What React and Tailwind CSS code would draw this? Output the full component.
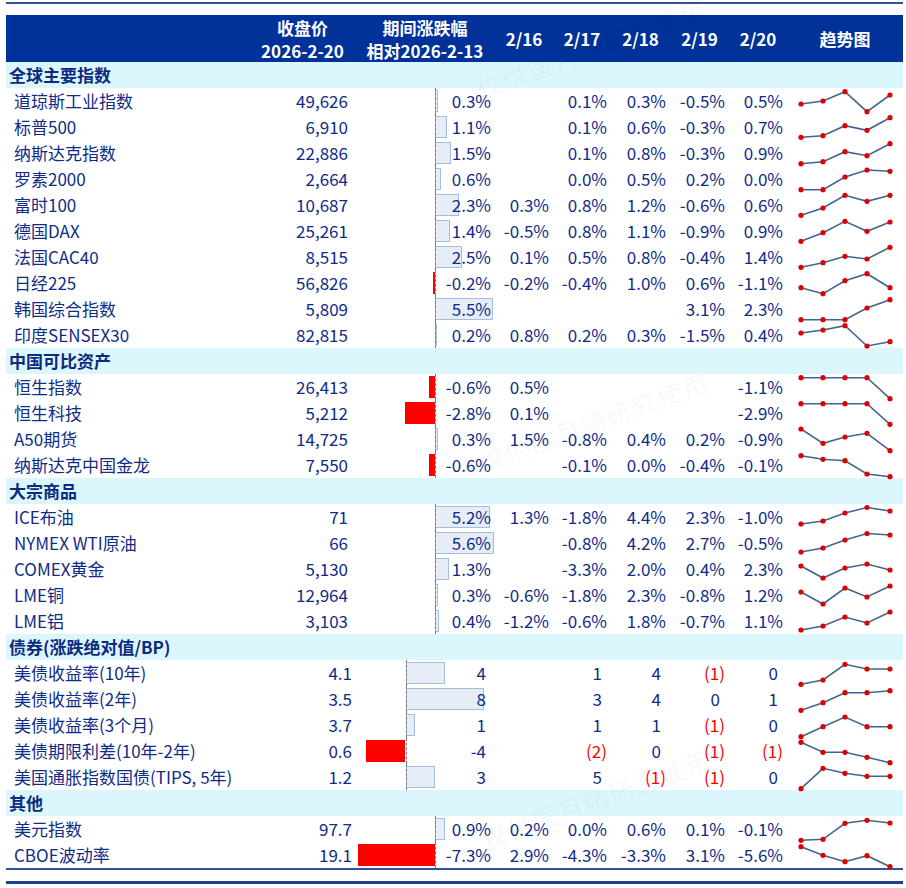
import React from "react";

const PCT = 10.6;
const BP = 9.8;

const sections = [
  {
    title: "全球主要指数",
    unit: "pct",
    rows: [
      { name: "道琼斯工业指数", price: "49,626", chg: 0.3, days: ["", "0.1%", "0.3%", "-0.5%", "0.5%"], spark: [16, 13, 3.7, 23.7, 7] },
      { name: "标普500", price: "6,910", chg: 1.1, days: ["", "0.1%", "0.6%", "-0.3%", "0.7%"], spark: [23.3, 21.7, 11.7, 16.3, 3.7] },
      { name: "纳斯达克指数", price: "22,886", chg: 1.5, days: ["", "0.1%", "0.8%", "-0.3%", "0.9%"], spark: [23.7, 21.7, 11.7, 15.7, 3.7] },
      { name: "罗素2000", price: "2,664", chg: 0.6, days: ["", "0.0%", "0.5%", "0.2%", "0.0%"], spark: [23.7, 23.7, 11, 4, 5.3] },
      { name: "富时100", price: "10,687", chg: 2.3, days: ["0.3%", "0.8%", "1.2%", "-0.6%", "0.6%"], spark: [23.3, 16, 3.3, 9.3, 3.3] },
      { name: "德国DAX", price: "25,261", chg: 1.4, days: ["-0.5%", "0.8%", "1.1%", "-0.9%", "0.9%"], spark: [23.3, 14.7, 3.3, 13.3, 4] },
      { name: "法国CAC40", price: "8,515", chg: 2.5, days: ["0.1%", "0.5%", "0.8%", "-0.4%", "1.4%"], spark: [23.3, 18.7, 12.3, 15, 3.3] },
      { name: "日经225", price: "56,826", chg: -0.2, days: ["-0.2%", "-0.4%", "1.0%", "0.6%", "-1.1%"], spark: [17.7, 23.7, 10.7, 3.7, 17.7] },
      { name: "韩国综合指数", price: "5,809", chg: 5.5, days: ["", "", "", "3.1%", "2.3%"], spark: [23.7, 23.7, 23.7, 12, 3.7] },
      { name: "印度SENSEX30", price: "82,815", chg: 0.2, days: ["0.8%", "0.2%", "0.3%", "-1.5%", "0.4%"], spark: [11, 8, 3.7, 24, 19.7] },
    ],
  },
  {
    title: "中国可比资产",
    unit: "pct",
    rows: [
      { name: "恒生指数", price: "26,413", chg: -0.6, days: ["0.5%", "", "", "", "-1.1%"], spark: [3.7, 3.7, 3.7, 3.7, 24.7] },
      { name: "恒生科技", price: "5,212", chg: -2.8, days: ["0.1%", "", "", "", "-2.9%"], spark: [3.7, 3.7, 3.7, 3.7, 24.3] },
      { name: "A50期货", price: "14,725", chg: 0.3, days: ["1.5%", "-0.8%", "0.4%", "0.2%", "-0.9%"], spark: [3, 17.3, 11, 7.3, 24.7] },
      { name: "纳斯达克中国金龙", price: "7,550", chg: -0.6, days: ["", "-0.1%", "0.0%", "-0.4%", "-0.1%"], spark: [3.7, 7.3, 8.7, 22, 24.7] },
    ],
  },
  {
    title: "大宗商品",
    unit: "pct",
    rows: [
      { name: "ICE布油", price: "71", chg: 5.2, days: ["1.3%", "-1.8%", "4.4%", "2.3%", "-1.0%"], spark: [20, 17, 9, 3.5, 7] },
      { name: "NYMEX WTI原油", price: "66", chg: 5.6, days: ["", "-0.8%", "4.2%", "2.7%", "-0.5%"], spark: [22, 18, 10, 3.5, 5] },
      { name: "COMEX黄金", price: "5,130", chg: 1.3, days: ["", "-3.3%", "2.0%", "0.4%", "2.3%"], spark: [10, 22, 12, 8, 14] },
      { name: "LME铜", price: "12,964", chg: 0.3, days: ["-0.6%", "-1.8%", "2.3%", "-0.8%", "1.2%"], spark: [10, 22, 6, 15, 4] },
      { name: "LME铝", price: "3,103", chg: 0.4, days: ["-1.2%", "-0.6%", "1.8%", "-0.7%", "1.1%"], spark: [22, 18, 9, 15, 4] },
    ],
  },
  {
    title: "债券(涨跌绝对值/BP)",
    unit: "bp",
    rows: [
      { name: "美债收益率(10年)", price: "4.1", chg: 4, days: ["", "1", "4", "(1)", "0"], spark: [24.3, 20, 4.3, 9, 9] },
      { name: "美债收益率(2年)", price: "3.5", chg: 8, days: ["", "3", "4", "0", "1"], spark: [24.3, 16.7, 6.7, 6.7, 4.7] },
      { name: "美债收益率(3个月)", price: "3.7", chg: 1, days: ["", "1", "1", "(1)", "0"], spark: [24.7, 14.7, 5, 14.7, 14.7] },
      { name: "美债期限利差(10年-2年)", price: "0.6", chg: -4, days: ["", "(2)", "0", "(1)", "(1)"], spark: [4.3, 14.3, 14.3, 19.3, 24.7] },
      { name: "美国通胀指数国债(TIPS, 5年)", price: "1.2", chg: 3, days: ["", "5", "(1)", "(1)", "0"], spark: [24.7, 4.3, 9.3, 12.3, 12.3] },
    ],
  },
  {
    title: "其他",
    unit: "pct",
    rows: [
      { name: "美元指数", price: "97.7", chg: 0.9, days: ["0.2%", "0.0%", "0.6%", "0.1%", "-0.1%"], spark: [24.3, 23.3, 7.3, 4.3, 7] },
      { name: "CBOE波动率", price: "19.1", chg: -7.3, days: ["2.9%", "-4.3%", "-3.3%", "3.1%", "-5.6%"], spark: [4.7, 13.3, 19.7, 13.7, 24.7] },
    ],
  },
];

const dayCols = ["w-[58px]", "w-[58px]", "w-[59px]", "w-[59px]", "w-[58px]"];
const sparkX = [14, 36, 58, 80, 103];

function Cell({ value, width }) {
  const neg = value.startsWith("(");
  const pct = value.endsWith("%");
  return (
    <div
      className={`${width} text-right ${pct || neg ? "pr-[4px]" : "pr-[9px]"} ${
        neg ? "text-[#ff0000]" : ""
      }`}
    >
      {value}
    </div>
  );
}

function Bar({ chg, unit }) {
  const axis = unit === "bp" ? 50.5 : 80;
  const w = Math.abs(chg) * (unit === "bp" ? BP : PCT);
  const label = unit === "bp" ? String(chg) : chg.toFixed(1) + "%";
  return (
    <div className="relative w-[140px] h-[26px]">
      {chg > 0 ? (
        <div
          className="absolute top-[2px] h-[22px] bg-[#e7edf7] border border-[#a5bde0]"
          style={{ left: axis, width: w }}
        />
      ) : (
        <div
          className="absolute top-[2px] h-[22px] bg-[#ff0000]"
          style={{ left: axis - w, width: w }}
        />
      )}
      <div
        className="absolute top-0 bottom-0 border-l border-dashed border-[#7a7a7a]"
        style={{ left: axis }}
      />
      <div className={`relative text-right ${unit === "bp" ? "pr-[9px]" : "pr-[4px]"}`}>
        {label}
      </div>
    </div>
  );
}

function Spark({ pts }) {
  const p = pts.map((y, i) => `${sparkX[i]},${y}`).join(" ");
  return (
    <svg width="116" height="26" className="overflow-visible">
      <polyline points={p} fill="none" stroke="#41668f" strokeWidth="1.6" />
      {pts.map((y, i) => (
        <circle key={i} cx={sparkX[i]} cy={y} r="2.6" fill="#dd0000" />
      ))}
    </svg>
  );
}

function Watermark({ x, y }) {
  return (
    <div
      className="absolute text-[25px] tracking-[2px] text-[#000000]/[0.04] whitespace-nowrap -rotate-[20deg] pointer-events-none select-none"
      style={{ left: x, top: y }}
    >
      仅供匡月晴研究使用
    </div>
  );
}

export default function App() {
  return (
    <div className="relative w-[906px] h-[888px] bg-white overflow-hidden font-['Noto_Sans_CJK_SC',sans-serif] text-[17px] leading-[26px] text-[#0f2c86]">
      <div className="mt-[2px] ml-[6px] w-[897px] h-[2px] bg-[#2f5597]" />
      <div className="mt-[11px] ml-[6px] w-[897px]">
        <div className="flex h-[47px] bg-[#00329a] text-white font-bold leading-[23px] items-center">
          <div className="w-[244px]" />
          <div className="w-[105px] text-center">
            <div>收盘价</div>
            <div>2026-2-20</div>
          </div>
          <div className="w-[140px] text-center">
            <div>期间涨跌幅</div>
            <div>相对2026-2-13</div>
          </div>
          {["2/16", "2/17", "2/18", "2/19", "2/20"].map((d, i) => (
            <div key={d} className={`${dayCols[i]} text-center`}>
              {d}
            </div>
          ))}
          <div className="w-[116px] text-center">趋势图</div>
        </div>

        {sections.map((s) => (
          <div key={s.title}>
            <div className="h-[26px] bg-[#dcf6fd] pl-[3px] font-bold text-[#0b2a80]">{s.title}</div>
            {s.rows.map((r) => (
              <div key={r.name} className="flex h-[26px] items-center whitespace-nowrap">
                <div className="w-[244px] pl-[8px]">{r.name}</div>
                <div
                  className={`w-[105px] text-right ${
                    r.price.includes(".") ? "pr-[3px]" : "pr-[7px]"
                  }`}
                >
                  {r.price}
                </div>
                <Bar chg={r.chg} unit={s.unit} />
                {r.days.map((d, i) => (
                  <Cell key={i} value={d} width={dayCols[i]} />
                ))}
                <div className="w-[116px]">
                  <Spark pts={r.spark} />
                </div>
              </div>
            ))}
          </div>
        ))}
      </div>
      <div className="ml-[6px] w-[897px] h-[2px] bg-[#2f5597]" />
      <div className="mt-[11px] ml-[6px] w-[897px] h-[3px] bg-[#1f3f8f]" />

      <Watermark x={470} y={35} />
      <Watermark x={472} y={408} />
      <Watermark x={475} y={785} />
    </div>
  );
}
